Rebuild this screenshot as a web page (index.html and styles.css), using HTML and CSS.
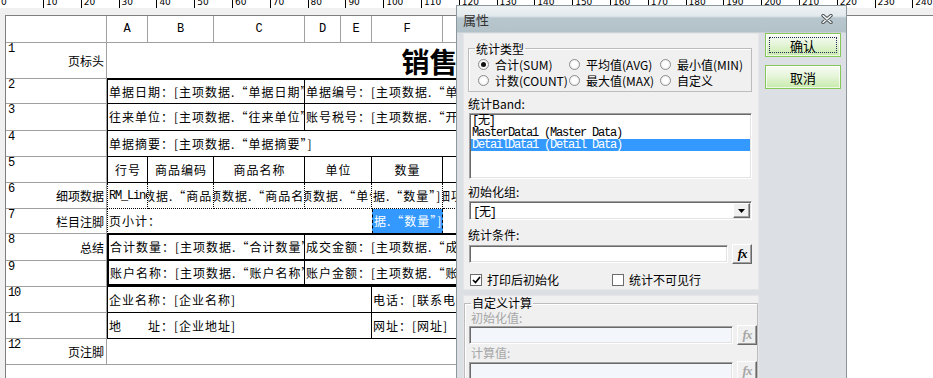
FILE: index.html
```html
<!DOCTYPE html>
<html lang="zh-CN">
  <head>
    <meta charset="utf-8">
    <title>报表设计 — 属性</title>
    <link rel="stylesheet" href="styles.css">
  </head>
  <body>
    <div class="ruler">
      <span class="zero">0</span><span>10</span><span>20</span><span>30</span><span>40</span><span>50</span><span>60</span><span>70</span><span>80</span><span>90</span><span>100</span><span>110</span><span>120</span><span>130</span><span>140</span><span>150</span><span>160</span><span>170</span><span>180</span><span>190</span><span>200</span><span>210</span><span>220</span><span>230</span><span>240</span>
    </div>

    <div class="canvas">
      <div class="sheet-wrap">
        <div class="sheet">
          <div class="hd"></div>
          <div class="hd">A</div><div class="hd">B</div><div class="hd">C</div><div class="hd">D</div>
          <div class="hd">E</div><div class="hd">F</div><div class="hd">G</div><div class="hd">H</div>

          <div class="band"><span class="num">1</span><span class="name">页标头</span></div>
          <div class="c s8 title">销售单</div>

          <div class="band"><span class="num">2</span></div>
          <div class="c s3 box first top">单据日期：[主项数据.“单据日期”]</div>
          <div class="c s5 box top">单据编号：[主项数据.“单据编号”]</div>

          <div class="band"><span class="num">3</span></div>
          <div class="c s3 box first">往来单位：[主项数据.“往来单位”]</div>
          <div class="c s5 box">账号税号：[主项数据.“开户行及账号”]</div>

          <div class="band"><span class="num">4</span></div>
          <div class="c s8 box first">单据摘要：[主项数据.“单据摘要”]</div>

          <div class="band"><span class="num">5</span></div>
          <div class="c box first center">行号</div>
          <div class="c box center">商品编码</div>
          <div class="c box center">商品名称</div>
          <div class="c s2 box center">单位</div>
          <div class="c box center">数量</div>
          <div class="c box"></div>
          <div class="c box"></div>

          <div class="band"><span class="num">6</span><span class="name">细项数据</span></div>
          <div class="c dots first"><span class="mono">RM_LineNo</span></div>
          <div class="c dots"><span class="cut">数据.“商品编码”]</span></div>
          <div class="c dots"><span class="cut">项数据.“商品名称”]</span></div>
          <div class="c s2 dots"><span class="cut">项数据.“单位”]</span></div>
          <div class="c dots">据.“数量”]</div>
          <div class="c dots"><span class="cut">细项数据</span></div>
          <div class="c dots"></div>

          <div class="band"><span class="num">7</span><span class="name">栏目注脚</span></div>
          <div class="c s5 foot first">页小计：</div>
          <div class="c sel">据.“数量”]</div>
          <div class="c foot"></div>
          <div class="c foot"></div>

          <div class="band"><span class="num">8</span><span class="name">总结</span></div>
          <div class="c s3 sum first">合计数量：[主项数据.“合计数量”]</div>
          <div class="c s5 sum">成交金额：[主项数据.“成交金额”]</div>

          <div class="band"><span class="num">9</span></div>
          <div class="c s3 sum last first">账户名称：[主项数据.“账户名称”]</div>
          <div class="c s5 sum last">账户金额：[主项数据.“账户金额”]</div>

          <div class="band"><span class="num">10</span></div>
          <div class="c s5 box first">企业名称：[企业名称]</div>
          <div class="c s3 box">电话：[联系电话]</div>

          <div class="band"><span class="num">11</span></div>
          <div class="c s5 box first">地　　址：[企业地址]</div>
          <div class="c s3 box">网址：[网址]</div>

          <div class="band"><span class="num">12</span><span class="name">页注脚</span></div>
          <div class="c s8 empty"></div>
        </div>
      </div>
    </div>

    <div class="dialog">
      <div class="dlg-title">
        <span>属性</span>
        <svg class="close" width="12" height="10" viewBox="0 0 12 10">
          <path d="M2 1.5L10 8.5M10 1.5L2 8.5" stroke="#4b5256" stroke-width="3.4" stroke-linecap="round"/>
          <path d="M2 1.5L10 8.5M10 1.5L2 8.5" stroke="#fff" stroke-width="1.4" stroke-linecap="round"/>
        </svg>
      </div>

      <div class="dlg-body">
        <div class="dlg-main">
          <div class="panel panel-stat">
            <fieldset class="group">
              <legend>统计类型</legend>
              <div class="radios">
                <label class="opt"><span class="radio on"></span>合计(SUM)</label>
                <label class="opt"><span class="radio"></span>平均值(AVG)</label>
                <label class="opt"><span class="radio"></span>最小值(MIN)</label>
                <label class="opt"><span class="radio"></span>计数(COUNT)</label>
                <label class="opt"><span class="radio"></span>最大值(MAX)</label>
                <label class="opt"><span class="radio"></span>自定义</label>
              </div>
            </fieldset>

            <div class="lbl lbl-band">统计Band:</div>
            <ul class="listbox">
              <li>[无]</li>
              <li>MasterData1 (Master Data)</li>
              <li class="picked">DetailData1 (Detail Data)</li>
            </ul>

            <div class="lbl lbl-gap">初始化组:</div>
            <div class="combo">
              <span class="mono">[无]</span>
              <span class="combo-btn">
                <svg width="7" height="4" viewBox="0 0 7 4"><path d="M0 0H7L3.5 4Z" fill="#000"/></svg>
              </span>
            </div>

            <div class="lbl lbl-wide">统计条件:</div>
            <div class="expr">
              <div class="input"></div>
              <div class="fx">fx</div>
            </div>

            <div class="checks">
              <label class="chk">
                <span class="tick-box">
                  <svg width="9" height="8" viewBox="0 0 9 8"><path d="M1 4L3.5 6.5L8 1" fill="none" stroke="#000" stroke-width="1.7"/></svg>
                </span>打印后初始化
              </label>
              <label class="chk"><span class="tick-box"></span>统计不可见行</label>
            </div>
          </div>

          <div class="panel panel-calc">
            <fieldset class="group group-calc">
              <legend>自定义计算</legend>
              <div class="lbl off">初始化值:</div>
              <div class="expr expr-off">
                <div class="input"></div>
                <div class="fx">fx</div>
              </div>
              <div class="lbl off">计算值:</div>
              <div class="expr expr-off expr-next">
                <div class="input"></div>
                <div class="fx">fx</div>
              </div>
            </fieldset>
          </div>
        </div>

        <div class="dlg-side">
          <button class="btn btn-default">确认</button>
          <button class="btn">取消</button>
        </div>
      </div>
    </div>
  </body>
</html>
```

FILE: styles.css
```css
* {
    box-sizing: border-box;
}

html, body {
    margin: 0;
    height: 100%;
}

body {
    position: relative;
    display: flex;
    flex-direction: column;
    overflow: hidden;
    background: #fff;
    color: #000;
    font-family: "Noto Sans CJK SC", sans-serif;
    font-size: 12px;
}

.mono {
    font-family: "Liberation Mono", "Noto Sans CJK SC", monospace;
    letter-spacing: -1.2px;
}

/* ruler */
.ruler {
    flex: none;
    display: flex;
    height: 8px;
    overflow: hidden;
    white-space: nowrap;
    font-family: "DejaVu Sans", sans-serif;
    font-size: 9px;
    line-height: 11px;
}
.ruler span {
    flex: 0 0 37.8px;
    margin-top: -3px;
    padding-left: 2px;
    border-left: 1px solid #000;
}
.ruler .zero {
    flex-basis: 43px;
    padding-left: 1px;
    border-left: 0;
}

/* design surface */
.canvas {
    flex: 1;
    display: flex;
    min-height: 0;
    padding: 7px 0 0 5px;
    background: #f0f0f0;
}
.sheet-wrap {
    flex: 1;
    overflow: hidden;
    background: #fff;
    border-left: 1px solid #7f7f7f;
    border-top: 1px solid #7f7f7f;
}
.sheet {
    display: grid;
    grid-template-columns: 101px 41px 66px 91px 36px 31px 71px 90px 244px;
    grid-template-rows: 27px 36px 25px 27px 26px 26px 26px 25px 27px 26px 26px 26px 26px;
    width: max-content;
    line-height: 14px;
}

.hd {
    display: flex;
    align-items: center;
    justify-content: center;
    border-right: 1px solid #a0a0a0;
    border-bottom: 1px solid #a0a0a0;
    font-family: "Liberation Mono", monospace;
    font-size: 12px;
}

.band {
    display: grid;
    padding: 1px 2px 0 2px;
    border-right: 1px solid #a0a0a0;
    border-bottom: 1px solid #a0a0a0;
}
.band > span {
    grid-area: 1 / 1;
}
.band .num {
    align-self: start;
    justify-self: start;
    font-family: "Liberation Mono", monospace;
    font-size: 12px;
    line-height: 10px;
    letter-spacing: -1.2px;
}
.band .name {
    align-self: center;
    justify-self: end;
}

.c {
    display: flex;
    align-items: center;
    min-width: 0;
    padding-left: 1px;
    overflow: hidden;
    white-space: nowrap;
    letter-spacing: 1px;
}
.s2 { grid-column: span 2; }
.s3 { grid-column: span 3; }
.s5 { grid-column: span 5; }
.s8 { grid-column: span 8; }
.center { justify-content: center; }
.cut { margin-left: -6px; }

.title {
    justify-content: center;
    padding-left: 3px;
    border-bottom: 1px solid #000;
    font-size: 28px;
    font-weight: bold;
    letter-spacing: 0;
}

.box {
    border-right: 1px solid #000;
    border-bottom: 1px solid #000;
}
.box.first { border-left: 1px solid #000; }
.box.top { border-top: 1px solid #000; }

.dots {
    border-right: 1px dotted #000;
    border-bottom: 1px dotted #000;
}
.dots.first { border-left: 1px dotted #000; }

.foot {
    border-bottom: 1px solid #000;
}
.foot.first { border-left: 1px dotted #000; }

.sel {
    background: #3399ff;
    color: #fff;
    border-left: 1px dashed #000;
    border-right: 1px dashed #000;
    border-bottom: 1px solid #000;
}

.sum {
    border-top: 1px solid #000;
    border-right: 1px solid #000;
    border-bottom: 2px solid #000;
}
.sum.first { border-left: 2px solid #000; }
.sum.last { border-top: 0; border-bottom-width: 3px; }

.empty {
    border-bottom: 1px solid #a0a0a0;
}

/* properties dialog */
.dialog {
    position: absolute;
    left: 456px;
    top: 5px;
    width: 391px;
    height: 380px;
    display: flex;
    flex-direction: column;
    background: #dcdfe3;
    border: 1px solid #8c979d;
    border-bottom: 0;
}

.dlg-title {
    flex: none;
    display: flex;
    align-items: center;
    justify-content: space-between;
    height: 27px;
    padding: 0 13px 0 6px;
    background: linear-gradient(#eef3f4, #e2e9ec 10px, #b8c7cd 12px, #b3c2c8);
    border-bottom: 1px solid #c9d1d5;
    color: #333;
    font-size: 13px;
}

.dlg-body {
    flex: 1;
    display: flex;
    gap: 6px;
    min-height: 0;
    padding: 0 5px 0 6px;
}
.dlg-main {
    width: 296px;
    display: flex;
    flex-direction: column;
    gap: 5px;
}
.dlg-side {
    width: 76px;
    display: flex;
    flex-direction: column;
    gap: 8px;
}

.panel {
    background: #f0f0f0;
    border: 1px solid #e6e6e6;
}
.panel-stat {
    padding: 7px 6px 2px 4px;
}
.panel-calc {
    flex: 1;
}

.group {
    min-width: 0;
    margin: 0;
    padding: 0 0 3px 6px;
    border: 1px solid #bcbcbc;
    box-shadow: inset 1px 1px #fff;
}
.group legend {
    padding: 0 1px;
    line-height: 15px;
}
.group-calc {
    height: 100%;
    padding-bottom: 0;
}
.group-calc legend {
    line-height: 14px;
}

.radios {
    display: grid;
    grid-template-columns: 91px 91px auto;
    grid-auto-rows: 16px;
    margin-left: 3px;
}
.opt {
    display: flex;
    align-items: center;
    gap: 6px;
    white-space: nowrap;
}
.radio {
    flex: none;
    display: grid;
    place-items: center;
    width: 11px;
    height: 11px;
    border: 1px solid #8d8d8d;
    border-radius: 50%;
    background: radial-gradient(#fff 35%, #e2e2e2);
}
.radio.on::after {
    content: "";
    width: 5px;
    height: 5px;
    border-radius: 50%;
    background: #111;
}

.lbl {
    line-height: 15px;
}
.lbl-band { margin-top: 4px; }
.lbl-gap { margin-top: 5px; }
.lbl-wide { margin-top: 7px; }
.lbl.off { color: #a6a6a6; }

.listbox,
.combo,
.input {
    background: #fff;
    border: 1px solid;
    border-color: #a0a0a0 #fff #fff #a0a0a0;
    box-shadow: inset 1px 1px #696969, inset -1px -1px #e3e3e3;
}

.listbox {
    width: 283px;
    height: 66px;
    margin: 2px 0 0 1px;
    padding: 1px;
    list-style: none;
    font-family: "Liberation Mono", "Noto Sans CJK SC", monospace;
    font-size: 12px;
    line-height: 12px;
    letter-spacing: -1.2px;
    white-space: nowrap;
}
.listbox li {
    padding-left: 1px;
}
.listbox .picked {
    background: #3399ff;
    color: #fff;
}

.combo {
    display: flex;
    align-items: center;
    justify-content: space-between;
    width: 283px;
    height: 19px;
    margin: 2px 0 0 1px;
    padding: 1px 1px 1px 3px;
}
.combo-btn {
    display: grid;
    place-items: center;
    width: 17px;
    height: 15px;
    background: #f0f0f0;
    border: 1px solid;
    border-color: #fff #696969 #696969 #fff;
    box-shadow: inset -1px -1px #a0a0a0;
}

.expr {
    display: flex;
    align-items: center;
    gap: 4px;
    height: 20px;
    margin: 2px 0 0 1px;
}
.expr .input {
    width: 264px;
    height: 18px;
}
.fx {
    display: grid;
    place-items: center;
    width: 20px;
    height: 20px;
    background: #f0f0f0;
    border: 1px solid;
    border-color: #fff #696969 #696969 #fff;
    box-shadow: inset -1px -1px #a0a0a0;
    font-family: "Liberation Serif", serif;
    font-size: 13px;
    font-style: italic;
    font-weight: bold;
    letter-spacing: -1px;
}
.expr-off {
    margin: 0 0 0 -2px;
}
.expr-off .input {
    background: #f3f6fb;
}
.expr-off .fx {
    color: #a6a6a6;
}
.expr-next {
    margin-top: 1px;
}

.checks {
    display: grid;
    grid-template-columns: 142px auto;
    height: 16px;
    margin: 7px 0 0 2px;
}
.chk {
    display: flex;
    align-items: center;
    gap: 5px;
}
.tick-box {
    display: grid;
    place-items: center;
    width: 12px;
    height: 12px;
    background: #fff;
    border: 1px solid #6c6c6c;
}

.btn {
    height: 24px;
    padding: 0;
    border: 1px solid #85c75a;
    background: linear-gradient(#f8fcf5, #e6f5da 45%, #c8ebab);
    box-shadow: inset 0 0 0 1px rgba(255, 255, 255, .7);
    color: #000;
    font-family: "Noto Sans CJK SC", sans-serif;
    font-size: 13px;
}
.btn-default {
    outline: 1px dotted #2a2a5a;
    outline-offset: -5px;
}
```
